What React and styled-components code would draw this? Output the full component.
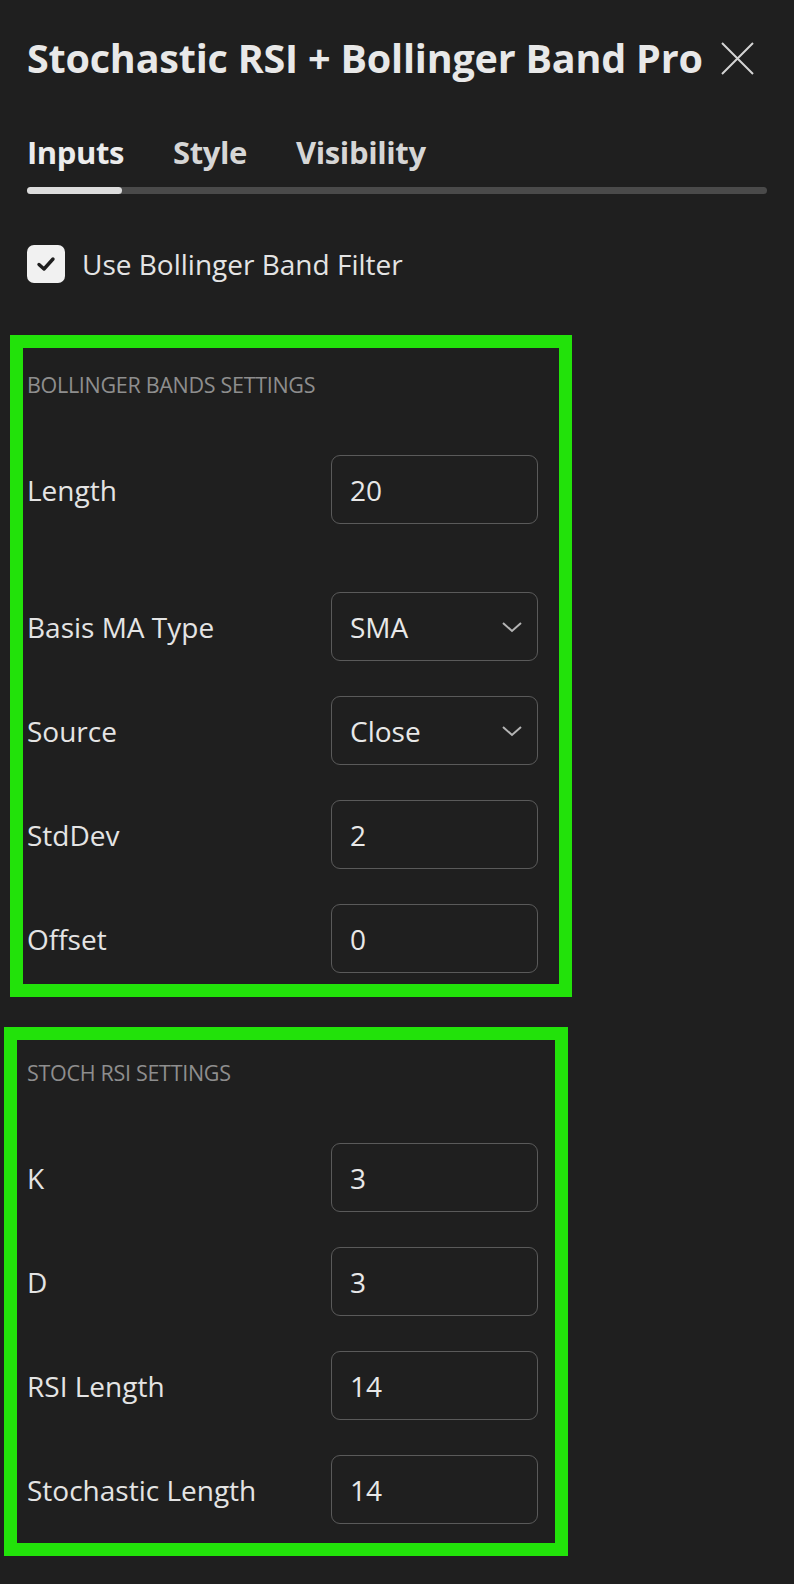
import React from 'react'
import styled, { createGlobalStyle } from 'styled-components'

const GlobalStyle = createGlobalStyle`
  html, body {
    margin: 0;
    padding: 0;
    background: #1f1f1f;
  }
  body {
    font-family: "Open Sans", "Liberation Sans", sans-serif;
    color: #e6e6e6;
  }
`

const Page = styled.div`
  width: 794px;
  min-height: 1584px;
  box-sizing: border-box;
  padding: 36px 27px 0 27px;
  background: #1f1f1f;
`

const Header = styled.div`
  display: flex;
  align-items: center;
  gap: 18px;
  height: 44px;
`

const Title = styled.h1`
  margin: 0;
  font-size: 39.5px;
  font-weight: 700;
  letter-spacing: -0.2px;
  color: #e8e8e8;
  white-space: nowrap;
`

const CloseButton = styled.button`
  display: flex;
  align-items: center;
  justify-content: center;
  width: 33px;
  height: 33px;
  padding: 0;
  border: none;
  background: none;
  color: #d4d4d4;
  cursor: pointer;
`

const TabBar = styled.div`
  margin-top: 52px;
`

const Tabs = styled.div`
  display: flex;
  gap: 49px;
  height: 40px;
  align-items: center;
`

const Tab = styled.div`
  font-size: 31px;
  font-weight: 700;
  letter-spacing: -0.4px;
  color: ${(p) => (p.$active ? '#ececec' : '#d6d6d6')};
`

const Track = styled.div`
  margin-top: 15px;
  height: 7px;
  border-radius: 4px;
  background: #4a4a4a;
`

const Indicator = styled.div`
  width: 95px;
  height: 100%;
  border-radius: 4px;
  background: #dcdcdc;
`

const CheckRow = styled.label`
  display: flex;
  align-items: center;
  gap: 17px;
  margin-top: 51px;
  font-size: 28px;
  font-weight: 500;
  color: #e4e4e4;
`

const CheckBox = styled.span`
  display: flex;
  align-items: center;
  justify-content: center;
  width: 38px;
  height: 38px;
  border-radius: 7px;
  background: #f1f1f1;
  color: #1f1f1f;
`

const Group = styled.section`
  display: flex;
  flex-direction: column;
  width: fit-content;
  margin-top: ${(p) => p.$gap}px;
  margin-left: -${(p) => p.$inset}px;
  padding: ${(p) => p.$padTop}px ${(p) => p.$padRight}px
    ${(p) => p.$padBottom}px ${(p) => p.$inset - 13}px;
  border: 13px solid #22e20a;
`

const GroupTitle = styled.div`
  height: 24px;
  line-height: 24px;
  margin-bottom: 58px;
  font-size: 21.5px;
  color: #8e8e8e;
  letter-spacing: -0.3px;
`

const Rows = styled.div`
  display: flex;
  flex-direction: column;
  gap: 35px;
`

const Row = styled.div`
  display: grid;
  grid-template-columns: 304px 207px;
  align-items: center;
  margin-bottom: ${(p) => (p.$spaced ? 33 : 0)}px;
`

const Label = styled.span`
  font-size: 28px;
  font-weight: 500;
  color: #e4e4e4;
  white-space: nowrap;
`

const Field = styled.div`
  display: flex;
  align-items: center;
  justify-content: space-between;
  height: 69px;
  box-sizing: border-box;
  padding: 0 14px 0 18px;
  border: 1.5px solid #5a5a5a;
  border-radius: 9px;
  font-size: 28px;
  font-weight: 500;
  color: #e8e8e8;
`

const Chevron = styled.svg`
  width: 22px;
  height: 12px;
  color: #b4b4b4;
`

const CloseIcon = () => (
  <svg width="33" height="33" viewBox="0 0 33 33" fill="none">
    <path d="M1 1L32 32M32 1L1 32" stroke="currentColor" strokeWidth="2" />
  </svg>
)

const CheckIcon = () => (
  <svg width="20" height="16" viewBox="0 0 20 16" fill="none">
    <path
      d="M3 8.5L8 13L17 3"
      stroke="currentColor"
      strokeWidth="3.4"
      strokeLinecap="round"
      strokeLinejoin="round"
    />
  </svg>
)

const Input = ({ value, select }) => (
  <Field>
    <span>{value}</span>
    {select && (
      <Chevron viewBox="0 0 22 12" fill="none">
        <path d="M2 2L11 10L20 2" stroke="currentColor" strokeWidth="2" />
      </Chevron>
    )}
  </Field>
)

const bollinger = [
  { label: 'Length', value: '20', spaced: true },
  { label: 'Basis MA Type', value: 'SMA', select: true },
  { label: 'Source', value: 'Close', select: true },
  { label: 'StdDev', value: '2' },
  { label: 'Offset', value: '0' },
]

const stoch = [
  { label: 'K', value: '3' },
  { label: 'D', value: '3' },
  { label: 'RSI Length', value: '14' },
  { label: 'Stochastic Length', value: '14' },
]

const SettingsGroup = ({ title, fields, ...rest }) => (
  <Group {...rest}>
    <GroupTitle>{title}</GroupTitle>
    <Rows>
      {fields.map((f) => (
        <Row key={f.label} $spaced={f.spaced}>
          <Label>{f.label}</Label>
          <Input value={f.value} select={f.select} />
        </Row>
      ))}
    </Rows>
  </Group>
)

const App = () => {
  return (
    <Page>
      <GlobalStyle />
      <Header>
        <Title>Stochastic RSI + Bollinger Band Pro</Title>
        <CloseButton aria-label="Close">
          <CloseIcon />
        </CloseButton>
      </Header>
      <TabBar>
        <Tabs>
          <Tab $active>Inputs</Tab>
          <Tab>Style</Tab>
          <Tab>Visibility</Tab>
        </Tabs>
        <Track>
          <Indicator />
        </Track>
      </TabBar>
      <CheckRow>
        <CheckBox>
          <CheckIcon />
        </CheckBox>
        Use Bollinger Band Filter
      </CheckRow>
      <SettingsGroup
        title="BOLLINGER BANDS SETTINGS"
        fields={bollinger}
        $gap={52}
        $inset={17}
        $padTop={25}
        $padRight={21}
        $padBottom={11}
      />
      <SettingsGroup
        title="STOCH RSI SETTINGS"
        fields={stoch}
        $gap={30}
        $inset={23}
        $padTop={21}
        $padRight={17}
        $padBottom={19}
      />
    </Page>
  )
}

export default App
